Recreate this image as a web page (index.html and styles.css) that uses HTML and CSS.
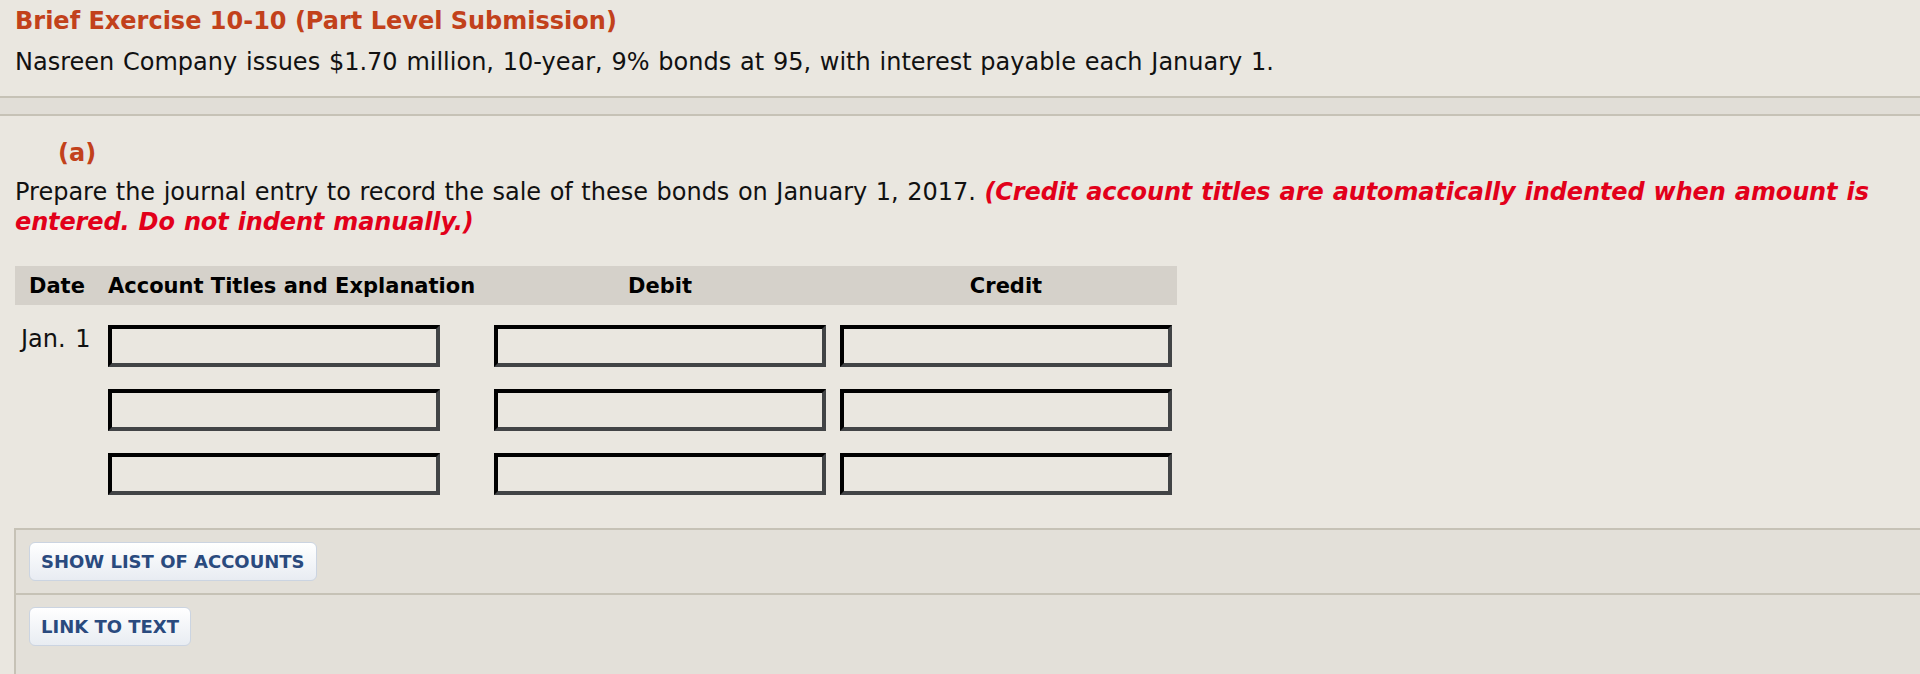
FILE: index.html
```html
<!DOCTYPE html>
<html lang="en">
<head>
<meta charset="utf-8">
<title>Brief Exercise 10-10</title>
<link rel="stylesheet" href="styles.css">
</head>
<body>
<div class="top">
  <h1 class="title">Brief Exercise 10-10 (Part Level Submission)</h1>
  <p class="intro">Nasreen Company issues $1.70 million, 10-year, 9% bonds at 95, with interest payable each January 1.</p>
</div>
<div class="rule"></div>
<section class="part">
  <h2 class="part-label">(a)</h2>
  <p class="prompt">Prepare the journal entry to record the sale of these bonds on January 1, 2017. <em class="note">(Credit account titles are automatically indented when amount is entered. Do not indent manually.)</em></p>
  <div class="journal">
    <div class="jhead">
      <div class="h-date">Date</div>
      <div class="h-acct">Account Titles and Explanation</div>
      <div class="h-amt">Debit</div>
      <div class="h-amt">Credit</div>
    </div>
    <div class="jrow">
      <div class="r-date">Jan. 1</div>
      <input class="field" type="text">
      <input class="field" type="text">
      <input class="field" type="text">
    </div>
    <div class="jrow">
      <div class="r-date"></div>
      <input class="field" type="text">
      <input class="field" type="text">
      <input class="field" type="text">
    </div>
    <div class="jrow">
      <div class="r-date"></div>
      <input class="field" type="text">
      <input class="field" type="text">
      <input class="field" type="text">
    </div>
  </div>
</section>
<div class="panel">
  <div class="panel-row"><button class="btn" type="button">SHOW LIST OF ACCOUNTS</button></div>
  <div class="panel-row"><button class="btn" type="button">LINK TO TEXT</button></div>
</div>
</body>
</html>
```

FILE: styles.css
```css
html, body {
  margin: 0;
  padding: 0;
}
body {
  background: #eae7e0;
  font-family: "DejaVu Sans", Verdana, sans-serif;
  font-size: 24px;
  color: #111;
  height: 674px;
  overflow: hidden;
  display: flex;
  flex-direction: column;
}
.top {
  padding: 7px 15px 0 15px;
}
.title {
  margin: 0;
  font-size: 24px;
  line-height: 28px;
  font-weight: bold;
  color: #c2411b;
}
.intro {
  margin: 13px 0 0 0;
  line-height: 28px;
  word-spacing: 1.15px;
}
.rule {
  margin-top: 20px;
  height: 16px;
  background: #e1ded7;
  border-top: 2px solid #c6c2b6;
  border-bottom: 2px solid #c6c2b6;
}
.part {
  padding: 0 15px;
}
.part-label {
  margin: 23px 0 0 43px;
  font-size: 24px;
  line-height: 28px;
  font-weight: bold;
  color: #c2411b;
}
.prompt {
  margin: 10px 0 0 0;
  line-height: 30px;
  word-spacing: 0.9px;
}
.note {
  font-weight: bold;
  font-style: italic;
  color: #e2001a;
  letter-spacing: -0.13px;
}
.journal {
  margin-top: 29px;
  width: 1162px;
}
.jhead, .jrow {
  display: grid;
  grid-template-columns: 93px 386px 346px 337px;
}
.jhead {
  background: #d5d1ca;
  height: 39px;
  line-height: 39px;
  font-size: 21px;
  font-weight: bold;
  color: #000;
}
.h-date, .h-acct, .h-amt {
  padding-top: 2px;
  line-height: 37px;
}
.h-date {
  padding-left: 14px;
}
.h-amt {
  width: 332px;
  text-align: center;
}
.jrow {
  margin-top: 20px;
  align-items: start;
}
.jrow + .jrow {
  margin-top: 22px;
}
.r-date {
  padding-left: 6px;
  line-height: 28px;
  color: #111;
  word-spacing: 2px;
}
.field {
  display: block;
  box-sizing: border-box;
  width: 332px;
  height: 42px;
  margin: 0;
  padding: 0 6px;
  background: #eae7e0;
  border-style: solid;
  border-width: 4px;
  border-color: #000 #424446 #424446 #000;
  font: inherit;
  outline: none;
}
.panel {
  margin: 33px 0 0 14px;
  flex: 1;
  background: #e3e0d9;
  border-top: 2px solid #c6c2b6;
  border-left: 2px solid #c6c2b6;
}
.panel-row {
  padding: 12px 0 12px 13px;
  border-bottom: 2px solid #c6c2b6;
}
.panel-row:last-child {
  border-bottom: none;
}
.btn {
  display: block;
  height: 39px;
  padding: 0 11px;
  margin: 0;
  border: 1px solid #cbd4e1;
  border-radius: 6px;
  background: linear-gradient(#ffffff, #e8ecf2);
  font-family: "DejaVu Sans", Verdana, sans-serif;
  font-size: 18px;
  font-weight: bold;
  color: #2a4a7e;
  cursor: pointer;
}
```
